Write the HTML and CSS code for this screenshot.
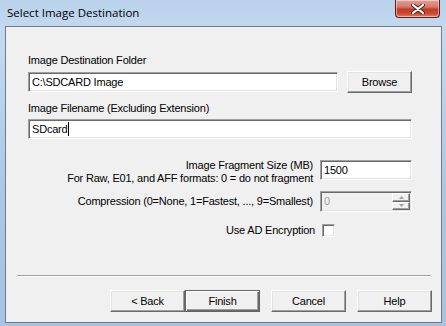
FILE: index.html
```html
<!DOCTYPE html>
<html lang="en">
<head>
    <meta charset="UTF-8">
    <title>Select Image Destination</title>
    <link rel="stylesheet" href="styles.css">
</head>
<body>
    <div class="window">
        <div class="titlebar">
            <span class="title">Select Image Destination</span>
            <button class="close-btn" aria-label="Close">
                <svg width="14" height="10" viewBox="0 0 14 10">
                    <path d="M2 1 L12 9 M12 1 L2 9" stroke="#3a2a2a" stroke-width="4" stroke-linecap="round"/>
                    <path d="M2 1 L12 9 M12 1 L2 9" stroke="#fff" stroke-width="2.2" stroke-linecap="round"/>
                </svg>
            </button>
        </div>
        <div class="client">
            <div class="fields">
                <div class="label">Image Destination Folder</div>
                <div class="path-row">
                    <div class="textbox path-box">C:\SDCARD Image</div>
                    <button class="btn browse-btn">Browse</button>
                </div>
                <div class="label label-gap">Image Filename (Excluding Extension)</div>
                <div class="textbox name-box">SDcard<span class="caret"></span></div>
            </div>

            <div class="options">
                <div class="opt-label">Image Fragment Size (MB)<br>For Raw, E01, and AFF formats: 0 = do not fragment</div>
                <div class="textbox opt-box">1500</div>

                <div class="opt-label compress-label">Compression (0=None, 1=Fastest, ..., 9=Smallest)</div>
                <div class="textbox opt-box spin-box disabled">
                    <span>0</span>
                    <div class="spin">
                        <div class="spin-btn"><svg width="5" height="3" viewBox="0 0 5 3"><path d="M0 3 L2.5 0 L5 3Z" fill="#a0a0a0"/></svg></div>
                        <div class="spin-btn"><svg width="5" height="3" viewBox="0 0 5 3"><path d="M0 0 L2.5 3 L5 0Z" fill="#a0a0a0"/></svg></div>
                    </div>
                </div>

                <div class="opt-label check-label">Use AD Encryption</div>
                <div class="check-cell"><span class="checkbox"></span></div>
            </div>

            <div class="spacer"></div>
            <div class="separator"></div>

            <div class="buttons">
                <button class="btn wide">&lt; Back</button>
                <button class="btn wide default-btn">Finish</button>
                <button class="btn wide cancel-btn">Cancel</button>
                <button class="btn wide">Help</button>
            </div>
        </div>
    </div>
</body>
</html>
```

FILE: styles.css
```css
body {
    margin: 0;
    width: 446px;
    height: 326px;
    overflow: hidden;
    font-family: "Liberation Sans", Arial, sans-serif;
    font-size: 11px;
    letter-spacing: -0.2px;
    color: #000;
}
.window {
    width: 446px;
    height: 326px;
    box-sizing: border-box;
    display: flex;
    flex-direction: column;
    background: linear-gradient(to bottom, #b9d1ea 0%, #c4daf0 10%, #aac7e6 60%, #a6c3e3 100%);
}
.titlebar {
    height: 26px;
    display: flex;
    align-items: flex-start;
    justify-content: space-between;
    padding: 0 6px 0 7px;
}
.title {
    font-family: "Open Sans", "Noto Sans", sans-serif;
    font-size: 11.5px;
    letter-spacing: 0;
    line-height: 13px;
    margin-top: 6px;
    color: #000;
}
.close-btn {
    width: 45px;
    height: 18px;
    margin: 0;
    padding: 0;
    border: 1px solid #5c1e1a;
    border-top: none;
    border-radius: 0 0 4px 4px;
    background: linear-gradient(to bottom, #e0a096 0%, #d47b6c 40%, #c13c28 55%, #cc4a2f 80%, #e0826c 100%);
    box-shadow: inset 0 0 0 1px rgba(255, 255, 255, 0.45);
    display: flex;
    align-items: center;
    justify-content: center;
}
.client {
    flex: 1;
    margin: 0 4px 3px 5px;
    border: 1px solid #6f7b88;
    background: #f0f0f0;
    display: flex;
    flex-direction: column;
}
.fields {
    padding: 27px 29px 0 22px;
}
.label {
    height: 13px;
    line-height: 13px;
    white-space: nowrap;
}
.label-gap {
    margin-top: 9px;
}
.textbox {
    box-sizing: border-box;
    height: 20px;
    background: #fff;
    border: 1px solid;
    border-color: #a0a0a0 #fff #fff #a0a0a0;
    box-shadow: inset 1px 1px 0 #696969, inset -1px -1px 0 #e3e3e3;
    padding: 0 3px;
    line-height: 18px;
    white-space: nowrap;
}
.path-row {
    display: flex;
    align-items: flex-start;
    margin-top: 4px;
}
.path-box {
    width: 310px;
    margin-top: 1px;
}
.name-box {
    margin-top: 4px;
    display: flex;
    align-items: center;
}
.caret {
    display: inline-block;
    width: 1px;
    height: 14px;
    background: #000;
    margin-left: 1px;
}
.btn {
    box-sizing: border-box;
    height: 22px;
    margin: 0;
    padding: 0;
    font-family: inherit;
    font-size: 11px;
    letter-spacing: -0.2px;
    color: #000;
    background: #f0f0f0;
    border: 1px solid;
    border-color: #fff #696969 #696969 #fff;
    box-shadow: inset -1px -1px 0 #a0a0a0, inset 1px 1px 0 #e3e3e3;
}
.browse-btn {
    width: 65px;
    margin-left: 9px;
}
.options {
    display: grid;
    grid-template-columns: 1fr 92px;
    column-gap: 7px;
    padding: 20px 29px 0 22px;
    align-items: center;
}
.opt-label {
    text-align: right;
    line-height: 13px;
    white-space: nowrap;
    color: #000;
}
.compress-label {
    margin-top: 6px;
}
.opt-box {
    align-self: start;
    margin-top: 1px;
}
.spin-box {
    height: 21px;
    margin-top: 6px;
    display: flex;
    justify-content: space-between;
    padding-right: 0;
}
.disabled {
    background: #f0f0f0;
    color: #a0a0a0;
}
.spin {
    display: flex;
    flex-direction: column;
    padding: 1px 1px 1px 0;
}
.spin-btn {
    box-sizing: border-box;
    width: 18px;
    height: 9px;
    border: 1px solid;
    border-color: #fff #696969 #696969 #fff;
    box-shadow: inset -1px -1px 0 #a0a0a0;
    display: flex;
    align-items: center;
    justify-content: center;
}
.check-label {
    margin-top: 12px;
    margin-right: -2px;
}
.check-cell {
    margin-top: 12px;
    height: 13px;
}
.checkbox {
    display: block;
    box-sizing: border-box;
    width: 13px;
    height: 13px;
    margin-left: 2px;
    background: #fff;
    border: 1px solid;
    border-color: #a0a0a0 #fff #fff #a0a0a0;
    box-shadow: inset 1px 1px 0 #696969, inset -1px -1px 0 #e3e3e3;
}
.spacer {
    flex: 1;
}
.separator {
    height: 1px;
    margin: 0 10px 13px 11px;
    background: #a0a0a0;
    border-bottom: 1px solid #fff;
}
.buttons {
    display: flex;
    justify-content: flex-end;
    padding: 0 9px 10px 0;
}
.wide {
    width: 75px;
}
.default-btn {
    border: 1px solid #646464;
    box-shadow: inset 1px 1px 0 #fff, inset -1px -1px 0 #696969, inset -2px -2px 0 #a0a0a0;
}
.cancel-btn {
    margin-left: 11px;
    margin-right: 11px;
}
```
